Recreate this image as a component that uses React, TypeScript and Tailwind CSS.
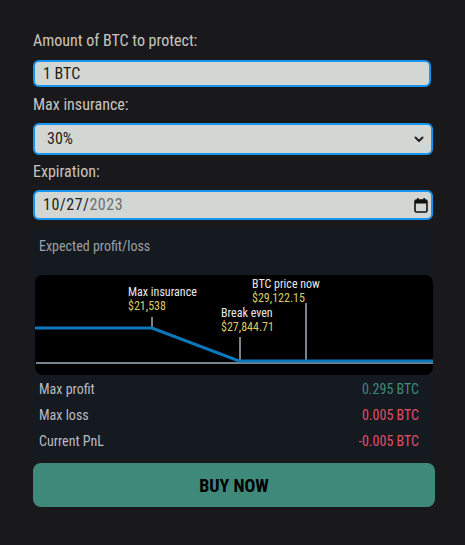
import React from "react";

const rows = [
  { label: "Max profit", value: "0.295 BTC", color: "text-[#3f8a7b]" },
  { label: "Max loss", value: "0.005 BTC", color: "text-[#e0506a]" },
  { label: "Current PnL", value: "-0.005 BTC", color: "text-[#e0506a]" },
];

export default function App() {
  return (
    <div className="min-h-[545px] w-[465px] bg-[#19191c] px-[33px] pt-[29px] font-['Roboto',sans-serif] font-stretch-condensed">
      <div className="flex w-[402px] flex-col">
        <div className="h-[24px] text-[16px] leading-[24px] text-[#c9c5bc]">Amount of BTC to protect:</div>
        <div className="mt-[7px] flex h-[27px] w-[398px] items-center rounded-[6px] border-2 border-[#1594f2] bg-[#d2d7d4] pl-[8px] text-[16px] text-[#1d1f22]">
          1 BTC
        </div>
        <div className="mt-[6px] h-[24px] text-[16px] leading-[24px] text-[#c9c5bc]">Max insurance:</div>
        <div className="mt-[6px] flex h-[32px] w-[400px] items-center justify-between rounded-[6px] border-2 border-[#1594f2] bg-[#d2d7d4] pl-[12px] pr-[6px] text-[16px] text-[#1d1f22]">
          <span>30%</span>
          <svg width="12" height="12" viewBox="0 0 12 12">
            <path d="M2.5 4.5 L6 8 L9.5 4.5" fill="none" stroke="#222" strokeWidth="2" strokeLinecap="round" strokeLinejoin="round" />
          </svg>
        </div>
        <div className="mt-[5px] h-[24px] text-[16px] leading-[24px] text-[#c9c5bc]">Expiration:</div>
        <div className="mt-[6px] flex h-[30px] w-[400px] items-center justify-between rounded-[6px] border-2 border-[#1594f2] bg-[#d2d7d4] pl-[8px] pr-[3px] text-[16px]">
          <span className="tracking-[0.5px]">
            <span className="text-[#1d1f22]">10/27/</span>
            <span className="text-[#6b6e70]">2023</span>
          </span>
          <svg width="14" height="16" viewBox="0 0 14 16">
            <rect x="1" y="3" width="12" height="12" rx="1.5" fill="none" stroke="#111" strokeWidth="1.6" />
            <rect x="1" y="3" width="12" height="3.5" fill="#111" />
            <rect x="3" y="1" width="1.6" height="3" fill="#111" />
            <rect x="9.4" y="1" width="1.6" height="3" fill="#111" />
          </svg>
        </div>

        <div className="mt-[9px] w-[400px] bg-[#151920] pb-[9px]">
          <div className="h-[20px] mt-[7px] pl-[6px] text-[14px] leading-[20px] text-[#9ca0a6]">Expected profit/loss</div>
          <div className="relative ml-[2px] mt-[19px] h-[100px] w-[398px] rounded-[8px] bg-black">
            <svg className="absolute left-0 top-0" width="398" height="100" viewBox="0 0 398 100">
              <line x1="1" y1="88" x2="398" y2="88" stroke="#7a838d" strokeWidth="2" />
              <line x1="117" y1="42" x2="117" y2="53" stroke="#7a838d" strokeWidth="2" />
              <line x1="205" y1="62" x2="205" y2="85" stroke="#7a838d" strokeWidth="2" />
              <line x1="271" y1="28" x2="271" y2="85" stroke="#7a838d" strokeWidth="2" />
              <polyline points="0,53 117,53 204,86 398,86" fill="none" stroke="#0a78ba" strokeWidth="3" />
            </svg>
            <div className="absolute left-[93px] top-[10px] text-[12px] leading-[14px]">
              <div className="text-[#e8e8e8]">Max insurance</div>
              <div className="text-[#dccb63]">$21,538</div>
            </div>
            <div className="absolute left-[186px] top-[31px] text-[12px] leading-[14px]">
              <div className="text-[#e8e8e8]">Break even</div>
              <div className="text-[#dccb63]">$27,844.71</div>
            </div>
            <div className="absolute left-[217px] top-[2px] text-[12px] leading-[14px]">
              <div className="text-[#e8e8e8]">BTC price now</div>
              <div className="text-[#dccb63]">$29,122.15</div>
            </div>
          </div>
          <div className="mt-[4px] flex flex-col gap-[6px] pl-[6px] pr-[14px]">
            {rows.map((r) => (
              <div key={r.label} className="flex h-[20px] items-center justify-between text-[14px] leading-[20px]">
                <span className="text-[#b9bcc1]">{r.label}</span>
                <span className={r.color}>{r.value}</span>
              </div>
            ))}
          </div>
        </div>

        <button className="mt-[3px] flex h-[44px] w-[402px] items-center justify-center rounded-[8px] bg-[#3e897a] text-[18px] font-bold text-black">
          BUY NOW
        </button>
      </div>
    </div>
  );
}
